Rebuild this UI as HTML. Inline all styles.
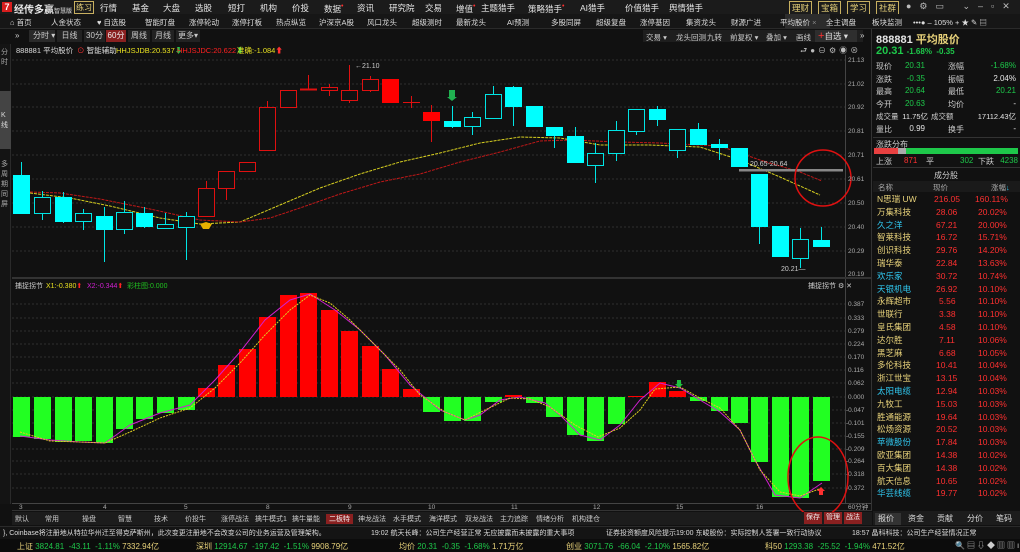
<!DOCTYPE html>
<html><head><meta charset="utf-8">
<style>
*{margin:0;padding:0;box-sizing:border-box}
body{width:1020px;height:552px;background:#111;overflow:hidden;font-family:"Liberation Sans","Noto Sans CJK SC",sans-serif;font-size:8px;color:#ccc;position:relative}
.a{position:absolute;white-space:nowrap}
.top{left:0;top:0;width:1020px;height:14px;background:#1b1b1b}
.nav{left:0;top:14px;width:1020px;height:15px;background:#161616;border-bottom:1px solid #2a2a2a}
.g{color:#1ec84a}.r{color:#ff3030}.y{color:#e8d27a}.w{color:#e6e6e6}.c{color:#30c8f0}
.rp div{height:12.5px}
</style></head><body>
<div class="a top"></div>
<div class="a" style="left:2px;top:2px;width:10px;height:10px;background:#d81e1e;color:#fff;font-weight:bold;font-size:9px;line-height:10px;text-align:center">7</div>
<div class="a w" style="left:14px;top:1px;font-size:10px;font-weight:bold">经传多赢<span style="font-size:6px;color:#aaa">智慧版</span></div>
<div class="a y" style="left:74px;top:1px;border:1px solid #c8b060;padding:0 1px;font-size:8px">练习</div>
<div class="a w" style="top:2px;left:100px;font-size:8.5px">行情</div>
<div class="a w" style="top:2px;left:132px;font-size:8.5px">基金</div>
<div class="a w" style="top:2px;left:163px;font-size:8.5px">大盘</div>
<div class="a w" style="top:2px;left:195px;font-size:8.5px">选股</div>
<div class="a w" style="top:2px;left:228px;font-size:8.5px">短打</div>
<div class="a w" style="top:2px;left:260px;font-size:8.5px">机构</div>
<div class="a w" style="top:2px;left:292px;font-size:8.5px">价投</div>
<div class="a w" style="top:2px;left:324px;font-size:8.5px">数据<sup class="r">•</sup></div>
<div class="a w" style="top:2px;left:357px;font-size:8.5px">资讯</div>
<div class="a w" style="top:2px;left:389px;font-size:8.5px">研究院</div>
<div class="a w" style="top:2px;left:425px;font-size:8.5px">交易</div>
<div class="a w" style="top:2px;left:456px;font-size:8.5px">增值<sup class="r">•</sup></div>
<div class="a w" style="top:2px;left:481px;font-size:8.5px">主题猎手</div>
<div class="a w" style="top:2px;left:528px;font-size:8.5px">策略猎手<sup class="r">•</sup></div>
<div class="a w" style="top:2px;left:580px;font-size:8.5px">AI猎手</div>
<div class="a w" style="top:2px;left:625px;font-size:8.5px">价值猎手</div>
<div class="a w" style="top:2px;left:669px;font-size:8.5px">舆情猎手</div>
<div class="a y" style="top:1px;left:789px;border:1px solid #c8b060;padding:0 2px;font-size:8.5px">理财</div>
<div class="a y" style="top:1px;left:818px;border:1px solid #c8b060;padding:0 2px;font-size:8.5px">宝箱</div>
<div class="a y" style="top:1px;left:847px;border:1px solid #c8b060;padding:0 2px;font-size:8.5px">学习</div>
<div class="a y" style="top:1px;left:876px;border:1px solid #c8b060;padding:0 2px;font-size:8.5px">社群</div>
<div class="a" style="top:1px;left:906px;color:#bbb;font-size:9px;letter-spacing:8px">●⚙▭ ⌄–▫✕</div>

<div class="a nav"></div>
<div class="a" style="top:14px;left:785px;width:45px;height:15px;background:#2c2c2c"></div>
<div class="a w" style="top:17px;left:0;font-size:7.5px;color:#ddd">
<span class="a" style="left:10px">⌂ 首页</span><span class="a" style="left:51px">人金状态</span><span class="a" style="left:97px">♥ 自选股</span><span class="a" style="left:145px">智能盯盘</span><span class="a" style="left:189px">涨停轮动</span><span class="a" style="left:232px">涨停打板</span><span class="a" style="left:276px">热点纵览</span><span class="a" style="left:319px">沪深京A股</span><span class="a" style="left:367px">风口龙头</span><span class="a" style="left:412px">超级测时</span><span class="a" style="left:456px">最新龙头</span><span class="a" style="left:507px">AI预测</span><span class="a" style="left:551px">多股同屏</span><span class="a" style="left:596px">超级复盘</span><span class="a" style="left:640px">涨停基因</span><span class="a" style="left:686px">集资龙头</span><span class="a" style="left:731px">财源广进</span><span class="a" style="left:780px">平均股价 <span style="color:#888">×</span></span><span class="a" style="left:826px">全主调盘</span><span class="a" style="left:872px">板块监测</span><span class="a" style="left:913px">•••● – 105% + ★ ✎ ▤</span></div>

<div class="a" style="top:31px;left:15px;color:#ccc;font-size:8px">»</div>
<div class="a" style="top:30px;left:29px;width:26px;height:12px;background:#2a2a2a;color:#ccc;padding-left:4px;line-height:12px">分时 ▾</div>
<div class="a" style="top:30px;left:57px;width:25px;height:12px;background:#222;color:#ccc;text-align:center;line-height:12px">日线</div>
<div class="a" style="top:30px;left:84px;width:21px;height:12px;background:#222;color:#ccc;text-align:center;line-height:12px">30分</div>
<div class="a" style="top:30px;left:106px;width:20px;height:12px;background:#8a2020;color:#eee;text-align:center;line-height:12px">60分</div>
<div class="a" style="top:30px;left:128px;width:22px;height:12px;background:#222;color:#ccc;text-align:center;line-height:12px">周线</div>
<div class="a" style="top:30px;left:152px;width:22px;height:12px;background:#222;color:#ccc;text-align:center;line-height:12px">月线</div>
<div class="a" style="top:30px;left:176px;width:24px;height:12px;background:#222;color:#ccc;text-align:center;line-height:12px">更多▾</div>
<div class="a" style="top:30px;left:643px;width:220px;height:12px;background:#1e1e1e"></div>
<div class="a" style="top:32px;left:646px;color:#ccc;font-size:7.5px">
<span class="a" style="left:0">交易 ▾</span><span class="a" style="left:30px">龙头回测</span><span class="a" style="left:61px">九转</span><span class="a" style="left:84px">前复权 ▾</span><span class="a" style="left:120px">叠加 ▾</span><span class="a" style="left:150px">画线</span></div>
<div class="a" style="top:30px;left:815px;width:42px;height:12px;background:#2e2e2e;color:#ddd;font-size:8.5px;line-height:12px;padding-left:3px"><span class="r" style="font-size:11px">+</span>自选 ▾</div>
<div class="a" style="top:31px;left:860px;color:#ccc">»</div>

<div class="a" style="left:0;top:44px;width:11px;height:460px;background:#141414;border-right:1px solid #2a2a2a"></div>
<div class="a" style="left:0;top:91px;width:11px;height:58px;background:#444"></div>
<div class="a" style="left:1px;top:48px;font-size:7px;color:#aaa;line-height:10px;white-space:normal;width:9px">分<br>时</div>
<div class="a" style="left:1px;top:111px;font-size:7px;color:#ddd;line-height:10px;white-space:normal;width:9px">K<br>线</div>
<div class="a" style="left:1px;top:160px;font-size:7px;color:#aaa;line-height:10px;white-space:normal;width:9px">多<br>周<br>期<br>同<br>屏</div>

<div class="a" style="top:45px;left:16px;color:#ddd;font-size:7.5px">888881 平均股价</div>
<div class="a" style="top:45px;left:77px;color:#ddd;font-size:7.5px"><span class="r">⊙</span> 智能辅助</div>
<div class="a" style="top:45px;left:116px;font-size:7.5px;color:#e8e020">HHJSJDB:20.537<span class="g">⬇</span></div>
<div class="a" style="top:45px;left:177px;font-size:7.5px;color:#ff2020">HHJSJDC:20.622<span class="g">⬇</span></div>
<div class="a" style="top:45px;left:237px;font-size:7.5px;color:#e8e020">准确:-1.084<span class="r">⬆</span></div>
<div class="a" style="top:45px;left:800px;font-size:8px;color:#bbb;letter-spacing:3px">⮐●⊖⚙◉⊗</div>

<svg class="a" style="left:0;top:0" width="872" height="512">
<g stroke="#2e2e2e" stroke-dasharray="2,2" stroke-width="1">
<line x1="12" x2="845" y1="60" y2="60"/><line x1="12" x2="845" y1="84" y2="84"/><line x1="12" x2="845" y1="107" y2="107"/><line x1="12" x2="845" y1="131" y2="131"/><line x1="12" x2="845" y1="155" y2="155"/><line x1="12" x2="845" y1="179" y2="179"/><line x1="12" x2="845" y1="203" y2="203"/><line x1="12" x2="845" y1="227" y2="227"/><line x1="12" x2="845" y1="251" y2="251"/>
<line x1="12" x2="845" y1="304" y2="304"/><line x1="12" x2="845" y1="318" y2="318"/><line x1="12" x2="845" y1="331" y2="331"/><line x1="12" x2="845" y1="344" y2="344"/><line x1="12" x2="845" y1="357" y2="357"/><line x1="12" x2="845" y1="370" y2="370"/><line x1="12" x2="845" y1="383" y2="383"/><line x1="12" x2="845" y1="397" y2="397"/><line x1="12" x2="845" y1="410" y2="410"/><line x1="12" x2="845" y1="423" y2="423"/><line x1="12" x2="845" y1="436" y2="436"/><line x1="12" x2="845" y1="449" y2="449"/><line x1="12" x2="845" y1="461" y2="461"/><line x1="12" x2="845" y1="474" y2="474"/><line x1="12" x2="845" y1="488" y2="488"/>
</g>
<line x1="845.5" x2="845.5" y1="55" y2="503" stroke="#444"/>
<rect x="12" y="277" width="860" height="2" fill="#333"/>
<line x1="12" x2="872" y1="503.5" y2="503.5" stroke="#444"/>
<line x1="12" x2="872" y1="510.5" y2="510.5" stroke="#333"/>
<polyline fill="none" stroke="#d8d020" stroke-width="1" stroke-dasharray="3,1" points="30,193 70,198 110,206 160,218 200,224 240,222 280,205 320,188 360,174 400,162 440,153 480,143 520,137 560,138 600,145 650,145 700,147 740,160 780,177 820,195"/>
<polyline fill="none" stroke="#c01818" stroke-width="1" stroke-dasharray="3,1" points="30,192 60,193 100,199 150,209 200,220 240,222 270,218 300,208 340,194 380,182 420,174 460,162 500,152 540,141 570,140 620,142 660,143 720,146 760,160 800,172 822,181"/>
<g stroke-width="1">
<g stroke="#00e5e5" fill="none">
<line x1="21.5" y1="162" x2="21.5" y2="175"/><rect x="13" y="175" width="17" height="39" fill="#00ffff" stroke="none"/>
<line x1="42.5" y1="191" x2="42.5" y2="220"/><rect x="34.5" y="197.5" width="16" height="16" fill="#111"/>
<line x1="63.5" y1="192" x2="63.5" y2="223"/><rect x="55" y="197" width="17" height="25" fill="#00ffff" stroke="none"/>
<line x1="83.5" y1="209" x2="83.5" y2="230"/><rect x="75.5" y="213.5" width="16" height="8" fill="#111"/>
<line x1="104.5" y1="207" x2="104.5" y2="262"/><rect x="96" y="216" width="17" height="14" fill="#00ffff" stroke="none"/>
<line x1="124.5" y1="201" x2="124.5" y2="234"/><rect x="116.5" y="212.5" width="16" height="17" fill="#111"/>
<line x1="144.5" y1="207" x2="144.5" y2="228"/><rect x="136" y="213" width="17" height="14" fill="#00ffff" stroke="none"/>
<line x1="165.5" y1="213" x2="165.5" y2="228"/><rect x="157.5" y="224.5" width="16" height="4" fill="#111"/>
<line x1="186.5" y1="212" x2="186.5" y2="260"/><rect x="178.5" y="216.5" width="16" height="11" fill="#111"/>
</g>
<g stroke="#e01010" fill="#111">
<line x1="206.5" y1="181" x2="206.5" y2="188"/><rect x="198.5" y="188.5" width="16" height="28"/>
<line x1="226.5" y1="188" x2="226.5" y2="200"/><rect x="218.5" y="171.5" width="16" height="17"/>
<rect x="239.5" y="162.5" width="16" height="9"/>
<line x1="267.5" y1="101" x2="267.5" y2="107"/><rect x="259.5" y="107.5" width="16" height="43"/>
<rect x="280.5" y="90.5" width="16" height="17"/>
<line x1="308.5" y1="75" x2="308.5" y2="90"/><line x1="300" y1="89.5" x2="317" y2="89.5" stroke-width="2"/>
<line x1="329.5" y1="84" x2="329.5" y2="96"/><rect x="321.5" y="87.5" width="16" height="3"/>
<line x1="349.5" y1="65" x2="349.5" y2="103"/><rect x="341.5" y="90.5" width="16" height="10"/>
<line x1="370.5" y1="76" x2="370.5" y2="92"/><rect x="362.5" y="79.5" width="16" height="11"/>
<rect x="382" y="79" width="17" height="24" fill="#ff0000" stroke="none"/>
<line x1="411.5" y1="96" x2="411.5" y2="108"/><line x1="403" y1="102.5" x2="420" y2="102.5"/>
<line x1="431.5" y1="105" x2="431.5" y2="142"/><rect x="423" y="112" width="17" height="9" fill="#ff0000" stroke="none"/>
</g>
<g stroke="#00e5e5" fill="none">
<line x1="452.5" y1="106" x2="452.5" y2="128"/><rect x="444" y="121" width="17" height="6" fill="#00ffff" stroke="none"/>
<line x1="472.5" y1="112" x2="472.5" y2="135"/><rect x="464.5" y="117.5" width="16" height="9" fill="#111"/>
<line x1="493.5" y1="86" x2="493.5" y2="119"/><rect x="485.5" y="94.5" width="16" height="24" fill="#111"/>
<line x1="513.5" y1="86" x2="513.5" y2="126"/><rect x="505" y="87" width="17" height="20" fill="#00ffff" stroke="none"/>
<rect x="526" y="106" width="17" height="21" fill="#00ffff" stroke="none"/>
<line x1="554.5" y1="127" x2="554.5" y2="148"/><rect x="546" y="127" width="17" height="9" fill="#00ffff" stroke="none"/>
<line x1="575.5" y1="127" x2="575.5" y2="163"/><rect x="567" y="136" width="17" height="27" fill="#00ffff" stroke="none"/>
<line x1="595.5" y1="143" x2="595.5" y2="183"/><rect x="587.5" y="153.5" width="16" height="12" fill="#111"/>
<line x1="616.5" y1="121" x2="616.5" y2="161"/><rect x="608.5" y="130.5" width="16" height="23" fill="#111"/>
<line x1="636.5" y1="131" x2="636.5" y2="135"/><rect x="628.5" y="109.5" width="16" height="22" fill="#111"/>
<line x1="657.5" y1="106" x2="657.5" y2="126"/><rect x="649" y="109" width="17" height="11" fill="#00ffff" stroke="none"/>
<line x1="677.5" y1="150" x2="677.5" y2="158"/><rect x="669.5" y="129.5" width="16" height="21" fill="#111"/>
<line x1="698.5" y1="123" x2="698.5" y2="129"/><rect x="690" y="129" width="17" height="16" fill="#00ffff" stroke="none"/>
<line x1="719.5" y1="139" x2="719.5" y2="160"/><rect x="711" y="144" width="17" height="4" fill="#00ffff" stroke="none"/>
<rect x="731" y="148" width="17" height="19" fill="#00ffff" stroke="none"/>
<line x1="759.5" y1="227" x2="759.5" y2="244"/><rect x="751" y="174" width="17" height="53" fill="#00ffff" stroke="none"/>
<rect x="772" y="226" width="17" height="31" fill="#00ffff" stroke="none"/>
<line x1="800.5" y1="228" x2="800.5" y2="268"/><rect x="792.5" y="239.5" width="16" height="19" fill="#111"/>
<line x1="821.5" y1="227" x2="821.5" y2="240"/><rect x="813" y="240" width="17" height="7" fill="#00ffff" stroke="none"/>
</g>
</g>
<rect x="739" y="169" width="104" height="2.5" fill="#888"/>
<text x="750" y="166" fill="#ccc" font-size="7" font-family="Liberation Sans">20.65-20.64</text>
<text x="355" y="68" fill="#ccc" font-size="7" font-family="Liberation Sans">←21.10</text>
<text x="781" y="271" fill="#ccc" font-size="7" font-family="Liberation Sans">20.21—</text>
<polygon points="200,224 206,222 212,224 209,229 203,229" fill="#e8b000"/>
<rect x="449" y="90" width="6" height="7" fill="#20b050"/><polygon points="447,97 457,97 452,101" fill="#20b050"/>
<circle cx="823" cy="178" r="28" fill="none" stroke="#e01010" stroke-width="1.5"/>
<g fill="#aaa" font-size="6.5" font-family="Liberation Sans">
<text x="848" y="62">21.13</text><text x="848" y="86">21.02</text><text x="848" y="109">20.92</text><text x="848" y="133">20.81</text><text x="848" y="157">20.71</text><text x="848" y="181">20.61</text><text x="848" y="205">20.50</text><text x="848" y="229">20.40</text><text x="848" y="253">20.29</text><text x="848" y="276">20.19</text>
<text x="848" y="306">0.387</text><text x="848" y="320">0.333</text><text x="848" y="333">0.279</text><text x="848" y="346">0.224</text><text x="848" y="359">0.170</text><text x="848" y="372">0.116</text><text x="848" y="385">0.062</text><text x="848" y="399">0.000</text><text x="846" y="412">-0.047</text><text x="846" y="425">-0.101</text><text x="846" y="438">-0.155</text><text x="846" y="451">-0.209</text><text x="846" y="463">-0.264</text><text x="846" y="476">-0.318</text><text x="846" y="490">-0.372</text>
<text x="19" y="509">3</text><text x="103" y="509">4</text><text x="184" y="509">5</text><text x="266" y="509">8</text><text x="348" y="509">9</text><text x="428" y="509">10</text><text x="511" y="509">11</text><text x="593" y="509">12</text><text x="676" y="509">15</text><text x="756" y="509">16</text><text x="848" y="509">60分钟</text>
</g>
<g fill="#22ff22">
<rect x="13" y="397" width="17" height="40"/><rect x="34" y="397" width="17" height="42"/><rect x="55" y="397" width="17" height="45"/><rect x="75" y="397" width="17" height="44"/><rect x="96" y="397" width="17" height="46"/><rect x="116" y="397" width="17" height="32"/><rect x="136" y="397" width="17" height="22"/><rect x="157" y="397" width="17" height="16"/><rect x="178" y="397" width="17" height="13"/>
<rect x="423" y="397" width="17" height="15"/><rect x="444" y="397" width="17" height="24"/><rect x="464" y="397" width="17" height="24"/><rect x="485" y="397" width="17" height="5"/><rect x="526" y="397" width="17" height="6"/><rect x="546" y="397" width="17" height="20"/><rect x="567" y="397" width="17" height="38"/><rect x="587" y="397" width="17" height="44"/><rect x="608" y="397" width="17" height="27"/>
<rect x="690" y="397" width="17" height="4"/><rect x="711" y="397" width="17" height="14"/><rect x="731" y="397" width="17" height="26"/><rect x="751" y="397" width="17" height="65"/><rect x="772" y="397" width="17" height="100"/><rect x="792" y="397" width="17" height="101"/><rect x="813" y="397" width="17" height="84"/>
</g>
<g fill="#ff0000">
<rect x="198" y="388" width="17" height="9"/><rect x="218" y="365" width="17" height="32"/><rect x="239" y="349" width="17" height="48"/><rect x="259" y="317" width="17" height="80"/><rect x="280" y="295" width="17" height="102"/><rect x="300" y="293" width="17" height="104"/><rect x="321" y="310" width="17" height="87"/><rect x="341" y="331" width="17" height="66"/><rect x="362" y="346" width="17" height="51"/><rect x="382" y="369" width="17" height="28"/><rect x="403" y="389" width="17" height="8"/>
<rect x="505" y="395" width="17" height="2"/><rect x="628" y="396" width="17" height="1"/><rect x="649" y="382" width="17" height="15"/><rect x="669" y="391" width="17" height="6"/>
</g>
<polyline fill="none" stroke="#d020d0" stroke-width="1" points="20,436 50,440 80,442 105,443 130,425 160,413 190,405 215,380 240,352 265,320 290,300 310,294 335,310 360,330 385,355 410,385 440,410 465,420 480,415 500,400 520,397 545,403 560,415 580,435 600,440 620,425 640,400 660,383 680,388 700,400 720,412 740,430 755,460 775,495 800,498 822,483"/>
<polyline fill="none" stroke="#e0d020" stroke-width="1" stroke-dasharray="2,1" points="20,432 50,441 80,442 105,443 130,432 160,418 190,408 215,388 240,363 265,335 290,310 310,295 330,303 350,320 375,345 400,370 420,395 445,412 465,420 485,410 510,398 530,399 550,407 575,425 598,437 620,428 640,410 655,389 680,387 700,398 720,408 740,430 760,470 780,492 800,496 822,488"/>
<polygon points="677,380 681,380 681,384 683,384 679,388 675,384 677,384" fill="#20c040"/>
<polygon points="819,495 823,495 823,491 825,491 821,487 817,491 819,491" fill="#ff3030"/>
<ellipse cx="818" cy="477" rx="30" ry="40" fill="none" stroke="#e01010" stroke-width="1.5"/>
<text x="15" y="288" font-size="7" font-family="Liberation Sans,Noto Sans CJK SC,sans-serif" fill="#ccc">捕捉拐节</text>
<text x="46" y="288" font-size="7" font-family="Liberation Sans" fill="#e8e020">X1:-0.380<tspan fill="#f22">⬆</tspan></text>
<text x="87" y="288" font-size="7" font-family="Liberation Sans" fill="#d020d0">X2:-0.344<tspan fill="#f22">⬆</tspan></text>
<text x="127" y="288" font-size="7" font-family="Liberation Sans,Noto Sans CJK SC,sans-serif" fill="#20c020">彩柱图:0.000</text>
<text x="808" y="288" font-size="7" font-family="Liberation Sans,Noto Sans CJK SC,sans-serif" fill="#ccc">捕捉拐节 ⚙ ✕</text>
</svg>

<div class="a" style="left:12px;top:512px;width:860px;height:13px;background:#1c1c1c"></div>
<div class="a" style="left:12px;top:514px;font-size:7px;color:#ccc">
<span class="a" style="left:3px">默认</span><span class="a" style="left:33px">常用</span><span class="a" style="left:70px">操盘</span><span class="a" style="left:106px">智慧</span><span class="a" style="left:142px">技术</span><span class="a" style="left:173px">价投牛</span><span class="a" style="left:209px">涨停战法</span><span class="a" style="left:243px">擒牛模式1</span><span class="a" style="left:280px">擒牛量能</span><span class="a" style="left:314px;background:#8a2020;padding:0 3px;color:#eee">二板特</span><span class="a" style="left:346px">神龙战法</span><span class="a" style="left:381px">水手模式</span><span class="a" style="left:417px">海洋模式</span><span class="a" style="left:453px">双龙战法</span><span class="a" style="left:488px">主力追踪</span><span class="a" style="left:524px">情绪分析</span><span class="a" style="left:560px">机构建仓</span></div>
<div class="a" style="left:804px;top:512px;width:18px;height:12px;background:#8a2020;color:#eee;font-size:7px;text-align:center;line-height:12px">保存</div>
<div class="a" style="left:824px;top:512px;width:18px;height:12px;background:#8a2020;color:#eee;font-size:7px;text-align:center;line-height:12px">管理</div>
<div class="a" style="left:844px;top:512px;width:18px;height:12px;background:#8a2020;color:#eee;font-size:7px;text-align:center;line-height:12px">战法</div>
<div class="a" style="left:873px;top:511px;width:147px;height:14px;background:#1c1c1c"></div>
<div class="a" style="left:875px;top:513px;width:26px;height:12px;background:#333"></div>
<div class="a" style="left:878px;top:513px;font-size:8px;color:#ddd"><span class="a" style="left:0">报价</span><span class="a" style="left:30px">资金</span><span class="a" style="left:59px">贡献</span><span class="a" style="left:89px">分价</span><span class="a" style="left:118px">笔码</span></div>

<div class="a" style="left:0;top:526px;width:1020px;height:13px;background:#141414;border-top:1px solid #2a2a2a"></div>
<div class="a" style="left:3px;top:528px;font-size:7px;color:#ddd">}, Coinbase将注册地从特拉华州迁至得克萨斯州，此次变更注册地不会改变公司的业务运营及管理架构。</div>
<div class="a" style="left:371px;top:528px;font-size:7px;color:#ddd">19:02 航天长峰：公司生产经营正常 无应披露而未披露的重大事项</div>
<div class="a" style="left:606px;top:528px;font-size:7px;color:#ddd">证券投资额度风险提示</div>
<div class="a" style="left:676px;top:528px;font-size:7px;color:#ddd">19:00 东峻股份：实际控制人签署一致行动协议</div>
<div class="a" style="left:852px;top:528px;font-size:7px;color:#ddd">18:57 晶科科技：公司生产经营情况正常</div>
<div class="a" style="left:0;top:539px;width:1020px;height:13px;background:#0c0c0c"></div>
<div class="a" style="left:17px;top:541px;font-size:8px"><span class="y">上证</span> <span class="g">3824.81 &nbsp;-43.11 &nbsp;-1.11%</span> <span class="y">7332.94亿</span></div>
<div class="a" style="left:196px;top:541px;font-size:8px"><span class="y">深圳</span> <span class="g">12914.67 &nbsp;-197.42 &nbsp;-1.51%</span> <span class="y">9908.79亿</span></div>
<div class="a" style="left:399px;top:541px;font-size:8px"><span class="y">均价</span> <span class="g">20.31 &nbsp;-0.35 &nbsp;-1.68%</span> <span class="y">1.71万亿</span></div>
<div class="a" style="left:566px;top:541px;font-size:8px"><span class="y">创业</span> <span class="g">3071.76 &nbsp;-66.04 &nbsp;-2.10%</span> <span class="y">1565.82亿</span></div>
<div class="a" style="left:765px;top:541px;font-size:8px"><span class="y">科50</span> <span class="g">1293.38 &nbsp;-25.52 &nbsp;-1.94%</span> <span class="y">471.52亿</span></div>
<div class="a" style="left:955px;top:540px;font-size:8px;color:#ccc;letter-spacing:2px">🔍▤⇩◆▥▥ıl</div>

<div class="a" style="left:871px;top:29px;width:1px;height:482px;background:#333"></div>
<div class="a" style="left:876px;top:31px;font-size:11px;font-weight:bold"><span class="w">888881</span> <span class="y">平均股价</span></div>
<div class="a" style="left:876px;top:45px;font-size:11px;font-weight:bold"><span class="g">20.31</span> <span class="g" style="font-size:8px">-1.68% &nbsp;-0.35</span></div>
<div class="a rp" style="left:876px;top:61px;width:142px;font-size:8px;color:#ccc">
<div style="position:relative">现价<span class="a g" style="right:93px">20.31</span><span class="a" style="left:72px">涨幅</span><span class="a g" style="right:2px">-1.68%</span></div>
<div style="position:relative">涨跌<span class="a g" style="right:93px">-0.35</span><span class="a" style="left:72px">振幅</span><span class="a w" style="right:2px">2.04%</span></div>
<div style="position:relative">最高<span class="a g" style="right:93px">20.64</span><span class="a" style="left:72px">最低</span><span class="a g" style="right:2px">20.21</span></div>
<div style="position:relative">今开<span class="a g" style="right:93px">20.63</span><span class="a" style="left:72px">均价</span><span class="a w" style="right:2px">-</span></div>
<div style="position:relative;font-size:7.5px">成交量<span class="a w" style="right:90px">11.75亿</span><span class="a" style="left:55px">成交额</span><span class="a w" style="right:2px">17112.43亿</span></div>
<div style="position:relative">量比<span class="a w" style="right:93px">0.99</span><span class="a" style="left:72px">换手</span><span class="a w" style="right:2px">-</span></div>
</div>
<div class="a" style="left:873px;top:137px;width:147px;height:1px;background:#333"></div>
<div class="a" style="left:876px;top:139px;font-size:8px;color:#ccc">涨跌分布</div>
<div class="a" style="left:874px;top:148px;width:24px;height:6px;background:#e84040"></div>
<div class="a" style="left:898px;top:148px;width:8px;height:6px;background:#aaa"></div>
<div class="a" style="left:906px;top:148px;width:112px;height:6px;background:#1ec84a"></div>
<div class="a" style="left:876px;top:156px;font-size:8px;color:#ccc;width:142px">上涨<span class="a r" style="left:28px">871</span><span class="a" style="left:50px">平</span><span class="a g" style="left:84px">302</span><span class="a" style="left:102px">下跌</span><span class="a g" style="right:0">4238</span></div>
<div class="a" style="left:873px;top:167px;width:147px;height:1px;background:#333"></div>
<div class="a" style="left:934px;top:170px;font-size:8px;color:#ccc">成分股</div>
<div class="a" style="left:873px;top:181px;width:147px;height:11px;background:#1a1a1a"></div>
<div class="a" style="left:878px;top:182px;font-size:7.5px;color:#aaa;width:140px">名称<span class="a" style="left:55px">现价</span><span class="a" style="left:113px">涨幅<span class="c">↓</span></span></div>
<div class="a" style="left:877px;top:193px;width:140px;font-size:8.5px;line-height:12.8px">
<div style="position:relative" class="y">N思瑞 UW<span class="a r" style="left:57px">216.05</span><span class="a r" style="left:98px">160.11%</span></div>
<div style="position:relative" class="y">万集科技<span class="a r" style="left:59px">28.06</span><span class="a r" style="left:101px">20.02%</span></div>
<div style="position:relative" class="c">久之洋<span class="a r" style="left:59px">67.21</span><span class="a r" style="left:101px">20.00%</span></div>
<div style="position:relative" class="y">智莱科技<span class="a r" style="left:59px">16.72</span><span class="a r" style="left:101px">15.71%</span></div>
<div style="position:relative" class="y">创识科技<span class="a r" style="left:59px">29.76</span><span class="a r" style="left:101px">14.20%</span></div>
<div style="position:relative" class="y">瑞华泰<span class="a r" style="left:59px">22.84</span><span class="a r" style="left:101px">13.63%</span></div>
<div style="position:relative" class="c">欢乐家<span class="a r" style="left:59px">30.72</span><span class="a r" style="left:101px">10.74%</span></div>
<div style="position:relative" class="c">天银机电<span class="a r" style="left:59px">26.92</span><span class="a r" style="left:101px">10.10%</span></div>
<div style="position:relative" class="y">永辉超市<span class="a r" style="left:62px">5.56</span><span class="a r" style="left:101px">10.10%</span></div>
<div style="position:relative" class="y">世联行<span class="a r" style="left:62px">3.38</span><span class="a r" style="left:101px">10.10%</span></div>
<div style="position:relative" class="y">皇氏集团<span class="a r" style="left:62px">4.58</span><span class="a r" style="left:101px">10.10%</span></div>
<div style="position:relative" class="y">达尔胜<span class="a r" style="left:62px">7.11</span><span class="a r" style="left:101px">10.06%</span></div>
<div style="position:relative" class="y">黑芝麻<span class="a r" style="left:62px">6.68</span><span class="a r" style="left:101px">10.05%</span></div>
<div style="position:relative" class="y">多伦科技<span class="a r" style="left:59px">10.41</span><span class="a r" style="left:101px">10.04%</span></div>
<div style="position:relative" class="y">浙江世宝<span class="a r" style="left:59px">13.15</span><span class="a r" style="left:101px">10.04%</span></div>
<div style="position:relative" class="c">太阳电缆<span class="a r" style="left:59px">12.94</span><span class="a r" style="left:101px">10.03%</span></div>
<div style="position:relative" class="y">九牧工<span class="a r" style="left:59px">15.03</span><span class="a r" style="left:101px">10.03%</span></div>
<div style="position:relative" class="y">胜通能源<span class="a r" style="left:59px">19.64</span><span class="a r" style="left:101px">10.03%</span></div>
<div style="position:relative" class="y">松炀资源<span class="a r" style="left:59px">20.52</span><span class="a r" style="left:101px">10.03%</span></div>
<div style="position:relative" class="c">苹微股份<span class="a r" style="left:59px">17.84</span><span class="a r" style="left:101px">10.03%</span></div>
<div style="position:relative" class="y">欧亚集团<span class="a r" style="left:59px">14.38</span><span class="a r" style="left:101px">10.02%</span></div>
<div style="position:relative" class="y">百大集团<span class="a r" style="left:59px">14.38</span><span class="a r" style="left:101px">10.02%</span></div>
<div style="position:relative" class="y">航天信息<span class="a r" style="left:59px">10.65</span><span class="a r" style="left:101px">10.02%</span></div>
<div style="position:relative" class="c">华芸线缆<span class="a r" style="left:59px">19.77</span><span class="a r" style="left:101px">10.02%</span></div>
</div>
</body></html>
